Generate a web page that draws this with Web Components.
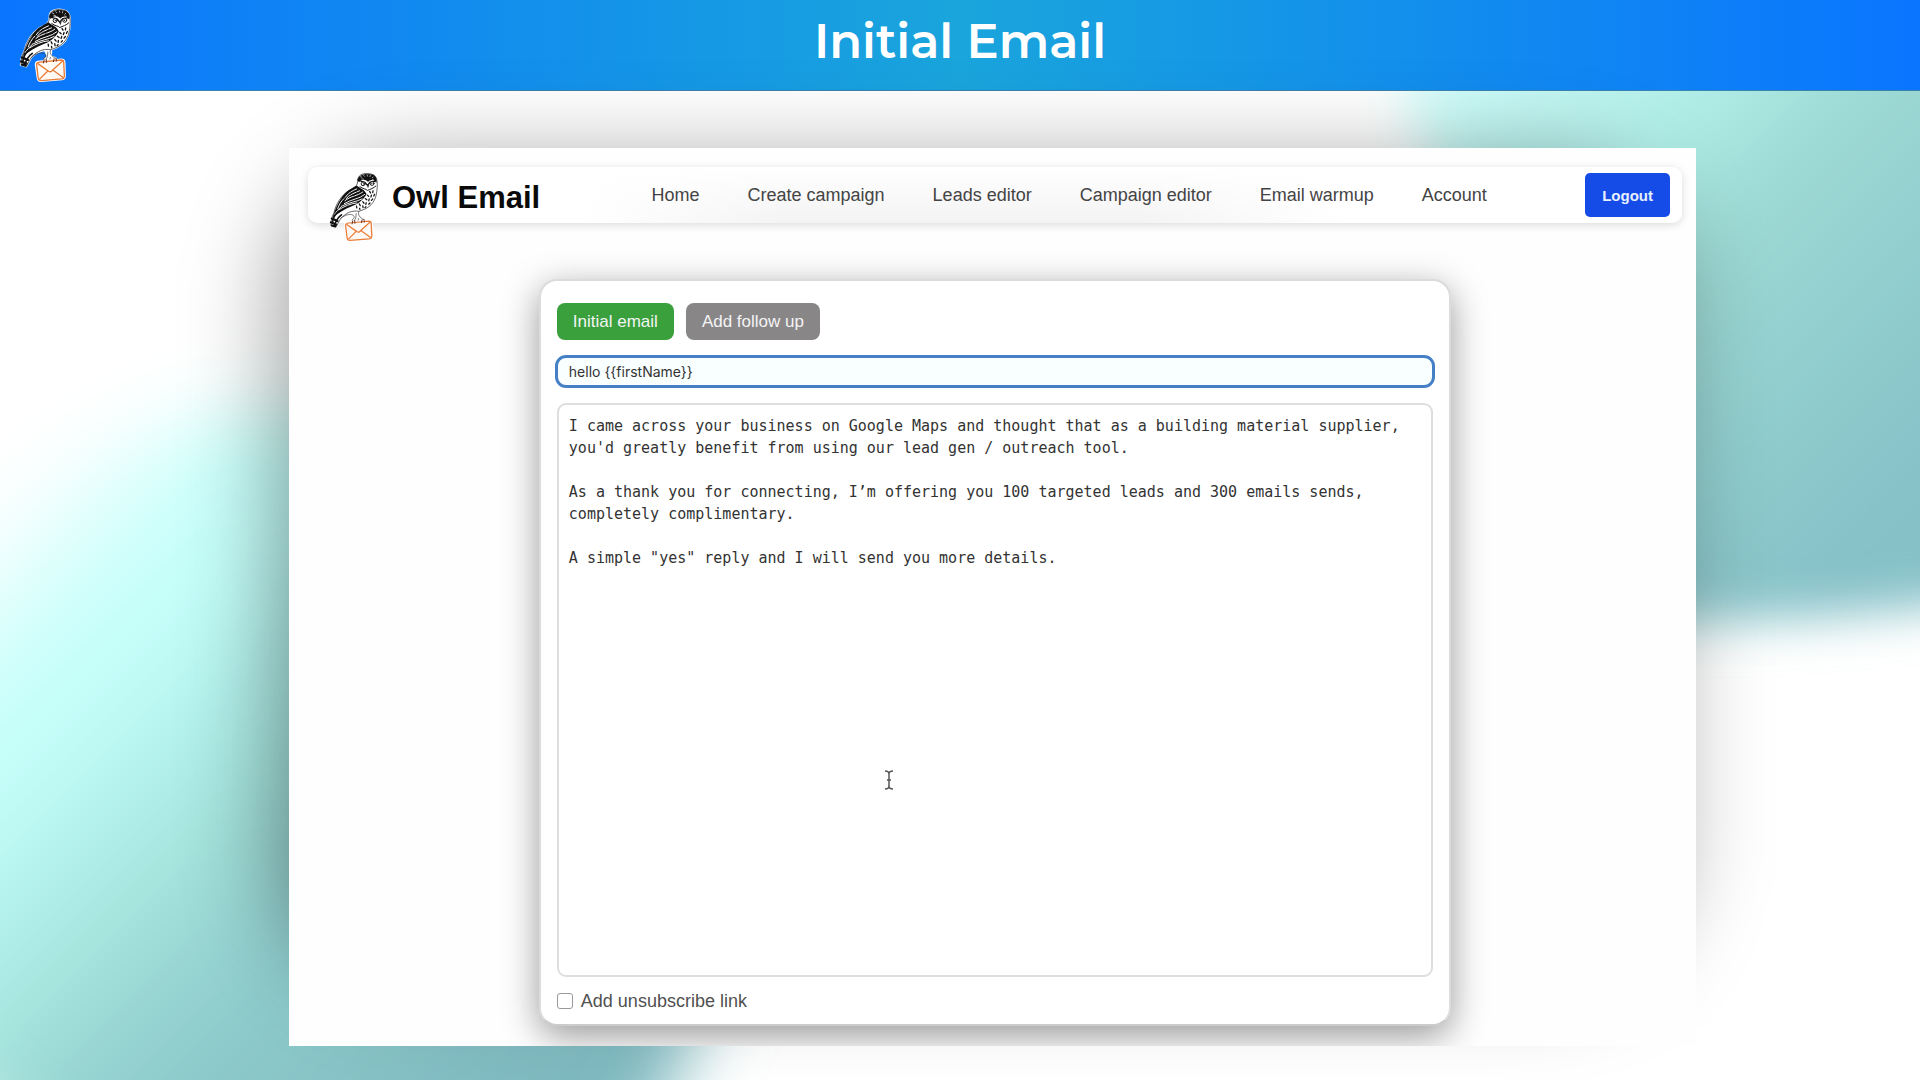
<!DOCTYPE html>
<html lang="en">
<head>
<meta charset="utf-8">
<title>Owl Email - Initial Email</title>
<style>
  body {
    margin: 0;
    font-family: "Liberation Sans", Arial, sans-serif;
  }
</style>
</head>
<body>
<demo-page>
  <slide-header slot="header">Initial Email</slide-header>
  <app-window>
    <nav-bar slot="nav" brand="Owl Email">
      <a href="#home">Home</a>
      <a href="#create">Create campaign</a>
      <a href="#leads">Leads editor</a>
      <a href="#campaign">Campaign editor</a>
      <a href="#warmup">Email warmup</a>
      <a href="#account">Account</a>
    </nav-bar>
    <email-editor subject="hello {{firstName}}">I came across your business on Google Maps and thought that as a building material supplier, you'd greatly benefit from using our lead gen / outreach tool.

As a thank you for connecting, I’m offering you 100 targeted leads and 300 emails sends, completely complimentary.

A simple "yes" reply and I will send you more details.</email-editor>
  </app-window>
</demo-page>

<script>
class OwlLogo extends HTMLElement {
    constructor() {
        super();
        this.attachShadow({ mode: 'open' });
        this.shadowRoot.innerHTML = `
      <style>
        :host { display: block; width: 53px; flex: none; }
        svg { display: block; width: 100%; }
      </style>
      <svg viewBox="56 20 160 226" role="img" aria-label="Owl carrying an envelope" fill="none" stroke-linecap="round" stroke-linejoin="round">
        <path d="M148 45C148 24 178 20 198 29C214 38 211 64 209 82C206 112 190 130 170 139L154 146L153 165L168 172L168 176H132L142 166L134 148C116 149 108 157 94 168L78 197L61 192C61 172 66 161 72 150C78 122 95 96 118 80C136 71 149 67 148 45Z" fill="#fff" stroke="#fff" stroke-width="5"/>
        <path d="M148 45C148 24 178 20 198 29C214 38 211 64 209 82C206 112 190 130 170 139L152 146C130 142 112 150 94 168L78 196L62 191C62 172 66 161 72 150C78 122 95 96 118 80C136 71 149 67 148 45Z" fill="#fff" stroke="#111" stroke-width="2"/>
        <path d="M148 48C147 27 176 22 198 29C210 36 210 49 207 55C199 43 188 44 181 52C173 42 158 42 152 53Z" fill="#111"/>
        <path d="M157 35l4 2M167 31l3 3M178 29l1 4M188 31l-1 4M197 36l-3 3M161 42l5 1M195 44l4 2" stroke="#fff" stroke-width="2"/>
        <path d="M154 48L171 53L179 63L188 52L203 50" stroke="#111" stroke-width="4"/>
        <circle cx="165" cy="58" r="6" fill="#fff" stroke="#111" stroke-width="3"/>
        <circle cx="194" cy="57" r="6" fill="#fff" stroke="#111" stroke-width="3"/>
        <circle cx="166" cy="58" r="2" fill="#111"/>
        <circle cx="193" cy="57" r="2" fill="#111"/>
        <path d="M176 61L185 61L181 72Z" fill="#333"/>
        <path d="M155 67C165 75 174 73 179 79C188 75 199 72 206 65" stroke="#111" stroke-width="3"/>
        <path d="M145 63C128 72 109 82 97 101C83 121 74 145 67 166C86 150 108 138 127 130C148 124 166 109 176 91C170 74 157 74 145 63Z" fill="#111"/>
        <path d="M145 74C130 80 116 88 108 101M154 80C138 87 121 92 111 105M164 84C145 98 126 96 107 112M170 92C153 107 129 106 105 121M162 106C144 116 122 116 97 129M104 105C94 114 88 126 84 137M145 119C125 121 106 129 87 141M96 130C86 139 80 147 74 155" stroke="#fff" stroke-width="3"/>
        <path d="M124 82l5 4M119 91l6 2M133 94l5 3M140 81l5 3M126 108l4-5M146 101l4-5" stroke="#111" stroke-width="2"/>
        <path d="M186 82l3 5M197 80l-1 6M179 94l4 4M192 94l-2 6M202 91l-3 6M172 105l5 4M185 106l-2 6M196 106l-4 5M164 115l4 5M175 118l-1 6M187 119l-4 4M153 122l3 6M164 128l1 6M174 131l-3 3M144 129l1 6M154 136l1 4" stroke="#111" stroke-width="4"/>
        <path d="M88 146C76 154 69 166 67 183M96 157C86 164 79 175 75 187" stroke="#111" stroke-width="5"/>
        <path d="M65 169L83 177M62 181L79 188M65 191L76 194" stroke="#111" stroke-width="7"/>
        <path d="M94 168C108 157 122 153 133 158C139 163 137 169 130 173M151 148C148 157 153 165 167 172M143 153C142 162 143 168 138 174M151 169L149 175" stroke="#333" stroke-width="2"/>
        <path d="M112 183L183 176C190 176 193 180 193 186L194 226C194 231 191 234 186 235L123 240C117 240 114 237 113 232L107 190C107 186 108 184 112 183Z" fill="#fff" stroke="#fff" stroke-width="7"/>
        <path d="M114 184L183 177C188 177 191 180 191 185L193 225C193 230 190 233 185 234L123 239C118 239 115 237 114 232L109 190C109 187 110 185 114 184Z" fill="#fffaf5" stroke="#e87b36" stroke-width="4"/>
        <path d="M113 188L144 210C149 214 153 213 156 209L187 181M119 234L143 210M159 208L188 229" stroke="#e87b36" stroke-width="4"/>
        <path d="M132 176l-2 10M138 175l1 9M162 173l-2 9M168 172l1 8" stroke="#632e20" stroke-width="3"/>
      </svg>
    `;
    }
}

class SlideHeader extends HTMLElement {
    constructor() {
        super();
        this.attachShadow({ mode: 'open' });
        this.shadowRoot.innerHTML = `
      <style>
        :host { display: block; }
        header {
          display: grid;
          grid-template-columns: 1fr auto 1fr;
          align-items: center;
          height: 90px;
          padding: 0 19px;
          border-bottom: 1px solid #3b82ad;
          background: linear-gradient(90deg, #0a75ff, #1aa5dc 50%, #0a75ff);
        }
        h1 {
          margin: 0 0 8px;
          color: #fff;
          font: 600 48px/56px Montserrat, Inter, sans-serif;
        }
      </style>
      <header>
        <owl-logo></owl-logo>
        <h1><slot></slot></h1>
      </header>
    `;
    }
}

class NavBar extends HTMLElement {
    constructor() {
        super();
        this.attachShadow({ mode: 'open' });
        this.shadowRoot.innerHTML = `
      <style>
        :host { display: block; }
        .bar {
          display: flex;
          align-items: center;
          height: 56px;
          padding: 0 12px 0 21px;
          border-radius: 10px;
          background: linear-gradient(90deg, #fff 20%, transparent 35%, transparent 60%, #fff 75%), linear-gradient(#fff, #f3f3f3);
          box-shadow: 0 2px 8px rgba(0, 0, 0, .14);
        }
        .brand {
          display: flex;
          align-items: flex-start;
          gap: 13px;
          height: 46px;
          color: #0a0a0a;
          font-size: 31px;
          line-height: 52px;
          font-weight: 700;
          text-decoration: none;
          white-space: nowrap;
        }
        owl-logo { width: 50px; }
        nav {
          display: flex;
          flex: 1;
          justify-content: center;
          gap: 48px;
          padding-left: 13px;
        }
        ::slotted(a) {
          color: #444;
          font-size: 18px;
          line-height: 24px;
          text-decoration: none;
          white-space: nowrap;
        }
        button {
          height: 44px;
          padding: 0 17px;
          border: 0;
          border-radius: 5px;
          background: #154be6;
          color: #e6f0ff;
          font: 700 15px "Liberation Sans", Arial, sans-serif;
        }
      </style>
      <div class="bar">
        <a class="brand" href="#home"><owl-logo></owl-logo><span></span></a>
        <nav><slot></slot></nav>
        <button type="button">Logout</button>
      </div>
    `;
    }

    connectedCallback() {
        this.shadowRoot.querySelector('.brand span').textContent = this.getAttribute('brand');
    }
}

class EmailEditor extends HTMLElement {
    constructor() {
        super();
        this.attachShadow({ mode: 'open' });
        this.shadowRoot.innerHTML = `
      <style>
        :host {
          display: flex;
          width: 66.4%;
          min-height: 500px;
        }
        form {
          display: flex;
          flex: 1;
          flex-direction: column;
          box-sizing: border-box;
          padding: 22px 16px 11px;
          border: 2px solid #dcdcdc;
          border-bottom-color: #ccc;
          border-radius: 18px;
          background: #fff;
          box-shadow: 0 10px 36px rgba(0, 0, 0, .4);
        }
        .steps {
          display: flex;
          gap: 12px;
          margin-bottom: 15px;
        }
        button {
          height: 37px;
          padding: 0 16px;
          border: 0;
          border-radius: 8px;
          background: #898688;
          color: #f4f4f4;
          font: 17px "Liberation Sans", Arial, sans-serif;
        }
        button.active { background: #39a03c; }
        input[type=text] {
          box-sizing: border-box;
          height: 33px;
          margin: 0 -2px 15px;
          padding: 0 11px;
          border: 3px solid #4580c6;
          border-radius: 11px;
          outline: 0;
          background: #f9feff;
          color: #333;
          font: 14px Inter, sans-serif;
        }
        .body {
          position: relative;
          display: flex;
          flex: 1;
        }
        textarea {
          flex: 1;
          box-sizing: border-box;
          padding: 10px;
          border: 2px solid #dedede;
          border-radius: 9px;
          outline: 0;
          resize: none;
          background: #fff;
          color: #333;
          font: 15px/22px "DejaVu Sans Mono", monospace;
        }
        .caret {
          position: absolute;
          left: 37.3%;
          top: 64%;
          pointer-events: none;
        }
        label {
          display: flex;
          align-items: center;
          gap: 8px;
          margin-top: 12px;
          color: #505050;
          font-size: 18px;
          line-height: 24px;
        }
        input[type=checkbox] {
          appearance: none;
          box-sizing: border-box;
          width: 16px;
          height: 16px;
          margin: 0;
          border: 1px solid #999;
          border-radius: 3px;
          background: #fff;
        }
      </style>
      <form>
        <div class="steps">
          <button type="button" class="active">Initial email</button>
          <button type="button">Add follow up</button>
        </div>
        <input type="text" aria-label="Subject">
        <div class="body">
          <textarea aria-label="Message" spellcheck="false"></textarea>
          <svg class="caret" width="10" height="20" viewBox="0 0 10 20" fill="none" stroke="#555" stroke-width="1.5">
            <path d="M1 1C3 1 5 2 5 4C5 2 7 1 9 1M5 4V16M1 19C3 19 5 18 5 16C5 18 7 19 9 19M3 10H7"/>
          </svg>
        </div>
        <label for="unsubscribe"><input type="checkbox" id="unsubscribe">Add unsubscribe link</label>
      </form>
    `;
        this.subjectInput = this.shadowRoot.querySelector('input[type=text]');
        this.messageInput = this.shadowRoot.querySelector('textarea');
    }

    connectedCallback() {
        this.subjectInput.value = this.getAttribute('subject');
        this.messageInput.value = this.textContent;
    }
}

class AppWindow extends HTMLElement {
    constructor() {
        super();
        this.attachShadow({ mode: 'open' });
        this.shadowRoot.innerHTML = `
      <style>
        :host {
          position: relative;
          display: flex;
          flex: 1;
        }
        /* soft shadow, heavier on the left side */
        :host::before {
          content: "";
          position: absolute;
          inset: 14px 22px 62px -12px;
          border-radius: 130px;
          background: rgba(0, 0, 0, .37);
          filter: blur(46px);
        }
        .window {
          position: relative;
          display: flex;
          flex: 1;
          flex-direction: column;
          align-items: center;
          gap: 56px;
          overflow: hidden;
          box-sizing: border-box;
          padding: 19px 14px 20px 19px;
          background: #fefefe;
        }
        slot[name=nav] { display: block; width: 100%; }
        ::slotted(email-editor) { flex: 1; }
      </style>
      <div class="window">
        <slot name="nav"></slot>
        <slot></slot>
      </div>
    `;
    }
}

class DemoPage extends HTMLElement {
    constructor() {
        super();
        this.attachShadow({ mode: 'open' });
        this.shadowRoot.innerHTML = `
      <style>
        :host {
          position: relative;
          display: flex;
          flex-direction: column;
          min-height: 100vh;
          overflow: hidden;
          background: #fff;
        }
        .backdrop {
          position: absolute;
          inset: 0;
          width: 100%;
          height: 100%;
        }
        slot[name=header] { display: block; position: relative; }
        main {
          display: flex;
          flex: 1;
          box-sizing: border-box;
          width: 100%;
          padding: 57px 224px 34px 289px;
        }
      </style>
      <svg class="backdrop" viewBox="0 0 1920 1080" preserveAspectRatio="none" aria-hidden="true">
        <defs>
          <linearGradient id="left" gradientUnits="userSpaceOnUse" x1="0" y1="0" x2="900" y2="900">
            <stop offset=".27" stop-color="#fff"/>
            <stop offset=".39" stop-color="#c8fffb"/>
            <stop offset=".45" stop-color="#c3fdf8"/>
            <stop offset=".51" stop-color="#b3f1ec"/>
            <stop offset=".6" stop-color="#a1dfd9"/>
            <stop offset=".68" stop-color="#8fcccc"/>
            <stop offset=".9" stop-color="#7fb9c0"/>
          </linearGradient>
          <linearGradient id="right" gradientUnits="userSpaceOnUse" x1="0" y1="0" x2="1250" y2="1250">
            <stop offset=".58" stop-color="#e4fffd"/>
            <stop offset=".62" stop-color="#cdfcf9"/>
            <stop offset=".66" stop-color="#c0f6f2"/>
            <stop offset=".72" stop-color="#afece6"/>
            <stop offset=".79" stop-color="#9cd8d3"/>
            <stop offset=".88" stop-color="#90cccd"/>
            <stop offset=".96" stop-color="#86c1c8"/>
          </linearGradient>
          <filter id="soft" x="-20%" y="-20%" width="140%" height="140%"><feGaussianBlur stdDeviation="34"/></filter>
          <filter id="softer" x="-20%" y="-20%" width="140%" height="140%"><feGaussianBlur stdDeviation="24"/></filter>
        </defs>
        <path fill="url(#left)" filter="url(#soft)" d="M-120 600L60 460L180 410L500 400L760 800Q730 1000 620 1180H60Q0 1130 -60 1080L-120 1000Z"/>
        <path fill="url(#right)" filter="url(#softer)" d="M1412 0H2050V590Q1800 630 1600 620Q1500 300 1402 100Z"/>
      </svg>
      <slot name="header"></slot>
      <main><slot></slot></main>
    `;
    }
}

customElements.define('owl-logo', OwlLogo);
customElements.define('slide-header', SlideHeader);
customElements.define('nav-bar', NavBar);
customElements.define('email-editor', EmailEditor);
customElements.define('app-window', AppWindow);
customElements.define('demo-page', DemoPage);
</script>
</body>
</html>
